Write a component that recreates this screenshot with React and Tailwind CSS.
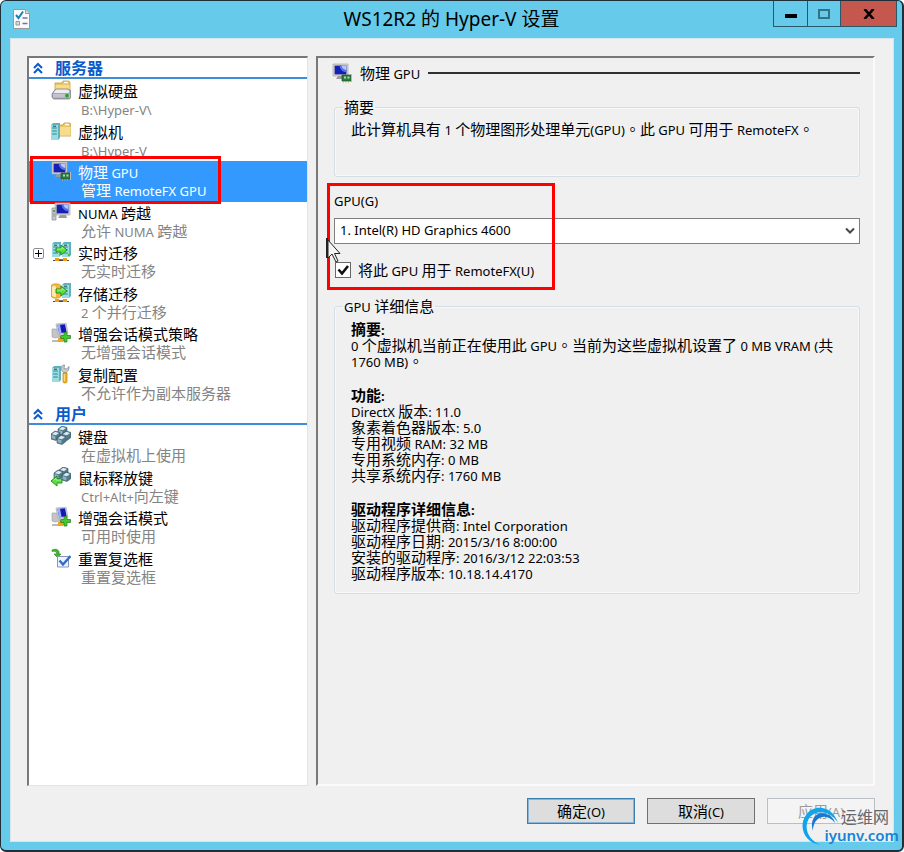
import { useState } from 'react';

// Latin runs are set smaller than the Chinese around them
function Mixed({ text, latin = 'text-[13px]' }) {
  return (
    <span>
      {text.split(/([\x20-\x7e]+|。)/).map((part, i) => {
        if (part === '。') {
          return <span key={i} className="font-['Noto_Sans_CJK_TC',sans-serif] leading-none">{part}</span>;
        }
        return i % 2 ? <span key={i} className={`leading-none ${latin}`}>{part}</span> : part;
      })}
    </span>
  );
}

/* ---------- icon pieces ---------- */

function Folder({ x = 0, y = 0 }) {
  return (
    <g transform={`translate(${x} ${y})`}>
      <path d="M1 3h7l1-2h6l1 2v11H1z" fill="#e9c766" stroke="#c39a3c" strokeWidth=".8" />
      <path d="M10 1.8h4v1.4h-4z" fill="#fff" />
      <path d="M1.6 5h14v8.6h-14z" fill="#f8dc8e" />
    </g>
  );
}

function Server({ x = 0, y = 0, h = 15 }) {
  return (
    <g transform={`translate(${x} ${y})`}>
      <path d={`M0 2l2-2h7v${h - 2}l-2 2H0z`} fill="#5fb3bf" />
      <path d={`M0 2h7v${h - 2}H0z`} fill="#9bdbe2" />
      <path d="M1.2 5h4.6M1.2 8h4.6M1.2 11h4.6" stroke="#2f8793" strokeWidth="1.1" />
      <path d="M2 3.2h3" stroke="#1c4c55" strokeWidth="1" />
    </g>
  );
}

function Monitor({ x = 0, y = 0 }) {
  return (
    <g transform={`translate(${x} ${y})`}>
      <path d="M5 12h6l1 3H3z" fill="#9a9a9a" />
      <path d="M0 0h15v12H0z" fill="#d6d4cc" stroke="#a9a79f" strokeWidth=".7" />
      <path d="M1.6 1.6h11.8v8.8H1.6z" fill="#1420b4" />
      <path d="M6.5 1.6h6.9v6.6C10 8.2 7 6 6.5 1.6z" fill="#5573e6" />
      <path d="M8.5 1.6h4.9v4.4C11 6 9 4.500 8.500 1.600z" fill="#b4c8fa" />
    </g>
  );
}

function Bench() {
  return (
    <g>
      <path d="M2 18.500h16" stroke="#55483a" strokeWidth="1" />
      <path d="M4 16h4v3H4zM12 16h4v3h-4z" fill="#e8a01c" />
      <path d="M8 17.500h4" stroke="#777" />
    </g>
  );
}

function Cube({ x, y }) {
  return (
    <g transform={`translate(${x} ${y})`}>
      <path d="M0 3l4-3 5 1.500v5L5 9.500 0 8z" fill="#50798a" stroke="#31505d" strokeWidth=".6" />
      <path d="M.8 3.200L4.200.8l3.800 1.200L5 4.200z" fill="#d8e9ef" />
      <path d="M.6 4l3.800 1.200v3.200L.6 7.200z" fill="#8fb3c1" />
    </g>
  );
}

function Arrow({ x = 0, y = 0, flip }) {
  return (
    <g transform={flip ? `translate(${x + 11} ${y}) scale(-1 1)` : `translate(${x} ${y})`}>
      <path d="M0 3h5V0l6 5-6 5V7H0z" fill="#5ddf3d" stroke="#198a16" strokeWidth=".9" />
      <path d="M1 4h5V2.200l2.600 2.300" fill="none" stroke="#b6f5a4" strokeWidth=".8" />
    </g>
  );
}

const icons = {
  disk: (
    <>
      <Folder x={3} y={0} />
      <path d="M3 11l2-2h12l3 2v6l-1.500 2h-16L1 17v-3z" fill="#a8a8b4" stroke="#70707c" strokeWidth=".7" />
      <path d="M3.500 11L5.500 9.500h11l2 1.500-1 2H3z" fill="#ececf2" />
      <path d="M2 14h17v3.500H2z" fill="#c3c3cf" />
      <circle cx="16" cy="15.700" r="1.900" fill="#20a81e" />
    </>
  ),
  machine: (
    <>
      <Folder x={4} y={1} />
      <Server x={0} y={2} h={17} />
    </>
  ),
  gpu: (
    <>
      <Monitor x={1} y={1} />
      <path d="M10 12h9v6h-9z" fill="#2a7c43" stroke="#1b4d2b" strokeWidth=".7" />
      <path d="M12 13.500h2v2h-2zM15.500 13.500h2v2h-2z" fill="#b2d9a2" />
      <path d="M11.500 18v1.500M14 18v1.500M16.500 18v1.500" stroke="#d9a520" />
      <path d="M19.500 11v8" stroke="#bbb" />
    </>
  ),
  numa: (
    <>
      <Monitor x={4} y={1} />
      <path d="M1 6h4v12H1z" fill="#c5c8cb" stroke="#8b8e91" strokeWidth=".7" />
      <path d="M2 9h2" stroke="#22a022" strokeWidth="1.500" />
      <path d="M2 12h2M2 14h2" stroke="#777" strokeWidth=".7" />
    </>
  ),
  live: (
    <>
      <Server x={1} y={0} />
      <Server x={11} y={0} />
      <Bench />
      <Arrow x={5} y={3} />
      <circle cx="18" cy="13" r="1.300" fill="#39c832" />
    </>
  ),
  storage: (
    <>
      <Server x={11} y={0} />
      <path d="M0 3c0-3 10-3 10 0v10c0 3-10 3-10 0z" fill="#f1b63f" stroke="#c98818" strokeWidth=".6" />
      <path d="M1 4c1-2 4-1.500 4 0v10c-2 0-4-.5-4-2z" fill="#fde9a9" />
      <Bench />
      <Arrow x={5} y={3} />
    </>
  ),
  session: (
    <>
      <path d="M1 6h8v8l-5 1-3-1z" fill="#c4c5c9" stroke="#9a9b9f" strokeWidth=".6" />
      <path d="M5 1l10-1 2 10-10 2z" fill="#d3d4da" stroke="#a4a4a8" strokeWidth=".6" />
      <path d="M6.500 2l7.500-.8L15.500 9 8.200 10.500z" fill="#1117bd" />
      <path d="M6.500 2l2.500-.3 1.600 8.300-2.400.5z" fill="#9db2f6" />
      <path d="M1 18h6l3-4h3v4" fill="none" stroke="#777" strokeWidth="1.200" />
      <path d="M7 15h5v4H7z" fill="#f0a51f" />
      <path d="M13 9.500h3v3h3.500v3H16V19h-3v-3.500H9.800v-3H13z" fill="#43c934" stroke="#1c7b17" strokeWidth=".7" />
    </>
  ),
  replica: (
    <>
      <Server x={1} y={2} h={16} />
      <path d="M10 3c0 4 2 4.500 2.500 5.500h3C16 7.500 18.500 6 18 2.500L15.500 5 13 4.500 13.500 1C12 .8 10.500 2 10 3z" fill="#c9cbce" stroke="#7c7e80" strokeWidth=".7" />
      <path d="M12 9h4v8.500c0 2-4 2-4 0z" fill="#f2b61f" stroke="#b77e0c" strokeWidth=".7" />
      <path d="M13.300 10v7" stroke="#ffe590" />
    </>
  ),
  keyboard: (
    <>
      <Cube x={7} y={0} />
      <Cube x={0} y={5} />
      <Cube x={11} y={5} />
      <Cube x={6} y={9} />
    </>
  ),
  mouse: (
    <>
      <Cube x={8} y={0} />
      <Cube x={3} y={3} />
      <Cube x={11} y={5} />
      <Arrow x={0} y={9} flip />
    </>
  ),
  reset: (
    <>
      <path d="M1 2c4-2 8 0 7 4h2L6.500 9.500 3 6h2.500C6 4 4 2.500 1 3.500z" fill="#45b532" stroke="#237e19" strokeWidth=".6" />
      <path d="M6.500 8.500h11v10.500h-11z" fill="#eef3fc" stroke="#8795b8" />
      <path d="M8.500 12.500l3.500 4L19.500 8" fill="none" stroke="#2f68d8" strokeWidth="2.400" />
    </>
  ),
};

function Icon({ name }) {
  return (
    <svg viewBox="0 0 20 20" className="size-5 shrink-0" aria-hidden="true">
      {icons[name]}
    </svg>
  );
}

const serverItems = [
  { icon: 'disk', title: '虚拟硬盘', note: 'B:\\Hyper-V\\' },
  { icon: 'machine', title: '虚拟机', note: 'B:\\Hyper-V' },
  { icon: 'gpu', title: '物理 GPU', note: '管理 RemoteFX GPU' },
  { icon: 'numa', title: 'NUMA 跨越', note: '允许 NUMA 跨越' },
  { icon: 'live', title: '实时迁移', note: '无实时迁移', expandable: true },
  { icon: 'storage', title: '存储迁移', note: '2 个并行迁移' },
  { icon: 'session', title: '增强会话模式策略', note: '无增强会话模式' },
  { icon: 'replica', title: '复制配置', note: '不允许作为副本服务器' },
];

const userItems = [
  { icon: 'keyboard', title: '键盘', note: '在虚拟机上使用' },
  { icon: 'mouse', title: '鼠标释放键', note: 'Ctrl+Alt+向左键' },
  { icon: 'session', title: '增强会话模式', note: '可用时使用' },
  { icon: 'reset', title: '重置复选框', note: '重置复选框' },
];

const details = [
  {
    title: '摘要:',
    lines: ['0 个虚拟机当前正在使用此 GPU。当前为这些虚拟机设置了 0 MB VRAM (共 1760 MB)。'],
  },
  {
    title: '功能:',
    lines: [
      'DirectX 版本: 11.0',
      '象素着色器版本: 5.0',
      '专用视频 RAM: 32 MB',
      '专用系统内存: 0 MB',
      '共享系统内存: 1760 MB',
    ],
  },
  {
    title: '驱动程序详细信息:',
    lines: [
      '驱动程序提供商: Intel Corporation',
      '驱动程序日期: 2015/3/16 8:00:00',
      '安装的驱动程序: 2016/3/12 22:03:53',
      '驱动程序版本: 10.18.14.4170',
    ],
  },
];

function TreeHeading({ children }) {
  return (
    <h2 className="flex h-[21px] items-center border-b-2 border-[#3c8ddc] pl-1 text-base font-bold text-[#0a5bcb]">
      <svg viewBox="0 0 10 12" className="mr-3 h-3 w-[10px]" fill="none" stroke="currentColor" strokeWidth="2" aria-hidden="true">
        <path d="M1 6l4-4 4 4M1 11l4-4 4 4" />
      </svg>
      {children}
    </h2>
  );
}

function TreeItem({ item, selected, onSelect }) {
  return (
    <li className={`relative flex ${selected ? 'bg-[#3399ff] text-white' : 'text-black'}`}>
      <span className="flex w-[22px] shrink-0 pt-[6px] pl-1">
        {item.expandable && (
          <button aria-label="展开" className="flex size-[11px] items-center justify-center rounded-[2px] border border-[#8a8f98] bg-white">
            <svg viewBox="0 0 7 7" className="size-[7px]" stroke="#000" aria-hidden="true">
              <path d="M0 3.500h7M3.500 0v7" />
            </svg>
          </button>
        )}
      </span>
      <button onClick={onSelect} className="flex grow gap-[7px] text-left text-[15px] whitespace-nowrap">
        <Icon name={item.icon} />
        <span>
          <span className="block leading-[22px]"><Mixed text={item.title} /></span>
          <span className={`block pl-[3px] leading-[14px] ${selected ? 'text-white' : 'text-[#848484]'}`}>
            <Mixed text={item.note} />
          </span>
        </span>
      </button>
      {item.icon === 'gpu' && (
        <span className="pointer-events-none absolute -top-[5px] left-px h-12 w-[191px] border-[3px] border-[#fe0000]" />
      )}
    </li>
  );
}

function Group({ title, children, className }) {
  return (
    <fieldset className={`rounded-[3px] border border-[#d3dee6] px-4 shadow-[inset_0_0_0_1px_#f8f8f8] ${className}`}>
      <legend className="-ml-2 px-px leading-5"><Mixed text={title} /></legend>
      {children}
    </fieldset>
  );
}

export default function App() {
  const [selected, setSelected] = useState('物理 GPU');
  const [remoteFx, setRemoteFx] = useState(true);

  return (
    <div className="relative flex min-h-screen flex-col rounded-md border-t border-r-2 border-b-2 border-l border-[#20303a] bg-[#66caea] font-['Noto_Sans','Noto_Sans_CJK_SC',sans-serif] text-[15px] text-black">
      <header className="grid h-[37px] grid-cols-[1fr_auto_1fr] items-start">
        <svg viewBox="0 0 17 20" className="mt-2 ml-3 h-5 w-[17px]" aria-hidden="true">
          <path d="M.5.500h12l4 4v15H.5z" fill="#fafafa" stroke="#999" />
          <path d="M12.500.500v4h4" fill="#ddd" stroke="#999" />
          <path d="M3 6l2.500 3L10 2.500" fill="none" stroke="#1f80b5" strokeWidth="2" />
          <path d="M9.500 9h5M9.500 14.500h5" stroke="#77749c" strokeWidth="1.500" />
          <path d="M3 12.500h3.500V16H3z" fill="#ddd" stroke="#999" />
        </svg>
        <h1 className="pt-1 text-[19px] leading-7"><Mixed text="WS12R2 的 Hyper-V 设置" latin="text-[19px]" /></h1>
        <div className="mr-[5px] flex h-[26px] justify-self-end border border-t-0 border-[#29586a]">
          <button aria-label="最小化" className="flex w-[34px] items-center justify-center border-r border-[#29586a]">
            <span className="mt-1 h-1 w-3 bg-black" />
          </button>
          <button aria-label="最大化" className="flex w-8 items-center justify-center">
            <span className="h-[10px] w-3 border-2 border-[#367286]" />
          </button>
          <button aria-label="关闭" className="flex w-14 items-center justify-center border-l border-[#29586a] bg-[#c4584f]">
            <svg viewBox="0 0 12 10" className="h-[10px] w-3" stroke="#000" strokeWidth="2.600" aria-hidden="true">
              <path d="M1.500 0l9 10M10.500 0l-9 10" />
            </svg>
          </button>
        </div>
      </header>

      <div className="mr-2 mb-2 ml-[9px] flex grow flex-col border border-[#d5e6ec] bg-[#f0f0f0] pt-[17px] pr-[18px] pl-4">
        <main className="flex grow gap-2">
          <nav className="w-[281px] shrink-0 border-t-2 border-r border-b border-l-2 border-t-[#787878] border-r-[#e3e3e3] border-b-[#e3e3e3] border-l-[#787878] bg-white">
            <TreeHeading>服务器</TreeHeading>
            <ul className="mt-px grid h-[324px] auto-rows-fr">
              {serverItems.map((item) => (
                <TreeItem key={item.title} item={item} selected={selected === item.title} onSelect={() => setSelected(item.title)} />
              ))}
            </ul>
            <TreeHeading>用户</TreeHeading>
            <ul className="mt-px grid h-[162px] auto-rows-fr">
              {userItems.map((item) => (
                <TreeItem key={item.title} item={item} selected={selected === item.title} onSelect={() => setSelected(item.title)} />
              ))}
            </ul>
          </nav>

          <section className="grow basis-0 border-2 border-t-[#787878] border-r-[#fafafa] border-b-[#fafafa] border-l-[#787878] pt-[5px] pr-[13px] pl-4">
            <h2 className="-ml-[2px] flex h-5 items-center gap-2">
              <Icon name="gpu" />
              <Mixed text="物理 GPU" />
              <span className="h-[2px] grow bg-[#303030]" />
            </h2>

            <Group title="摘要" className="mt-[14px] h-20">
              <p className="pt-[2px] leading-5">
                <Mixed text="此计算机具有 1 个物理图形处理单元(GPU)。此 GPU 可用于 RemoteFX。" />
              </p>
            </Group>

            <div className="relative mt-[14px]">
              <label htmlFor="gpu" className="block text-[13px] leading-5">GPU(G)</label>
              <div className="relative mt-[7px]">
                <select id="gpu" className="block h-[26px] w-full appearance-none border border-[#7f7f7f] bg-white pl-[5px] text-[13px]">
                  <option>1. Intel(R) HD Graphics 4600</option>
                </select>
                <svg viewBox="0 0 10 8" className="pointer-events-none absolute top-[9px] right-[5px] h-2 w-[10px]" fill="none" stroke="#484848" strokeWidth="2" aria-hidden="true">
                  <path d="M1 1.500l4 4 4-4" />
                </svg>
              </div>
              <div className="mt-4 flex items-center gap-[7px] pl-px">
                <span className="relative flex size-4">
                  <input
                    id="remotefx"
                    type="checkbox"
                    checked={remoteFx}
                    onChange={(e) => setRemoteFx(e.target.checked)}
                    className="size-4 appearance-none border border-[#686868] bg-white"
                  />
                  {remoteFx && (
                    <svg viewBox="0 0 16 16" className="pointer-events-none absolute inset-0" fill="none" stroke="#111" strokeWidth="2.600" aria-hidden="true">
                      <path d="M3.500 7.500l3.500 4 6-7.500" />
                    </svg>
                  )}
                </span>
                <label htmlFor="remotefx" className="leading-5"><Mixed text="将此 GPU 用于 RemoteFX(U)" /></label>
              </div>
              <span className="pointer-events-none absolute -top-2 -left-[7px] h-[107px] w-[228px] border-[3px] border-[#fe0000]" />
              <svg viewBox="0 0 16 26" className="pointer-events-none absolute top-[47px] -left-2 h-[26px] w-4" aria-hidden="true">
                <path d="M0 0h2v20H0z" fill="#222" />
                <path d="M2 2v18l4-4 4 8 2-1-3.500-7.500H14z" fill="#f4f4f4" stroke="#222" />
              </svg>
            </div>

            <Group title="GPU 详细信息" className="mt-4 h-[298px]">
              <div className="flex flex-col gap-[18px] pt-[5px] leading-4">
                {details.map((block) => (
                  <div key={block.title}>
                    <h3 className="font-bold"><Mixed text={block.title} /></h3>
                    {block.lines.map((line) => (
                      <p key={line}><Mixed text={line} /></p>
                    ))}
                  </div>
                ))}
              </div>
            </Group>
          </section>
        </main>

        <footer className="flex justify-end gap-3 pt-3 pb-[17px]">
          <button className="h-[26px] w-[108px] border border-[#3c7fb1] bg-[#dddddd] shadow-[inset_0_0_0_1px_#8bb5d6]"><Mixed text="确定(O)" /></button>
          <button className="h-[26px] w-[108px] border border-[#707070] bg-[#dddddd]"><Mixed text="取消(C)" /></button>
          <button disabled className="h-[26px] w-[108px] border border-[#b9bfc4] bg-[#f4f4f4] text-[#9b9b9b]"><Mixed text="应用(A)" /></button>
        </footer>
      </div>

      <div className="pointer-events-none absolute right-[3px] bottom-1 flex h-10 w-[98px] flex-col items-end">
        <svg viewBox="0 0 40 40" className="absolute top-0 left-0 size-10" aria-hidden="true">
          <path d="M20 39C3 37-3 20 5 9 13-2 31-1 37 17 30 5 16 3 9 11c-7 9-3 23 11 28z" fill="#12a4ea" />
          <path d="M12 25C8 13 16 5 25 8c5 1 8 5 9 9-5-7-12-8-17-4-4 3-5 8-5 12z" fill="#1679d3" />
        </svg>
        <span className="mr-[10px] text-base leading-[22px] text-[#66666c]">运维网</span>
        <span className="text-[15px] leading-[14px] font-semibold text-[#1683d8]">iyunv.com</span>
      </div>
    </div>
  );
}
